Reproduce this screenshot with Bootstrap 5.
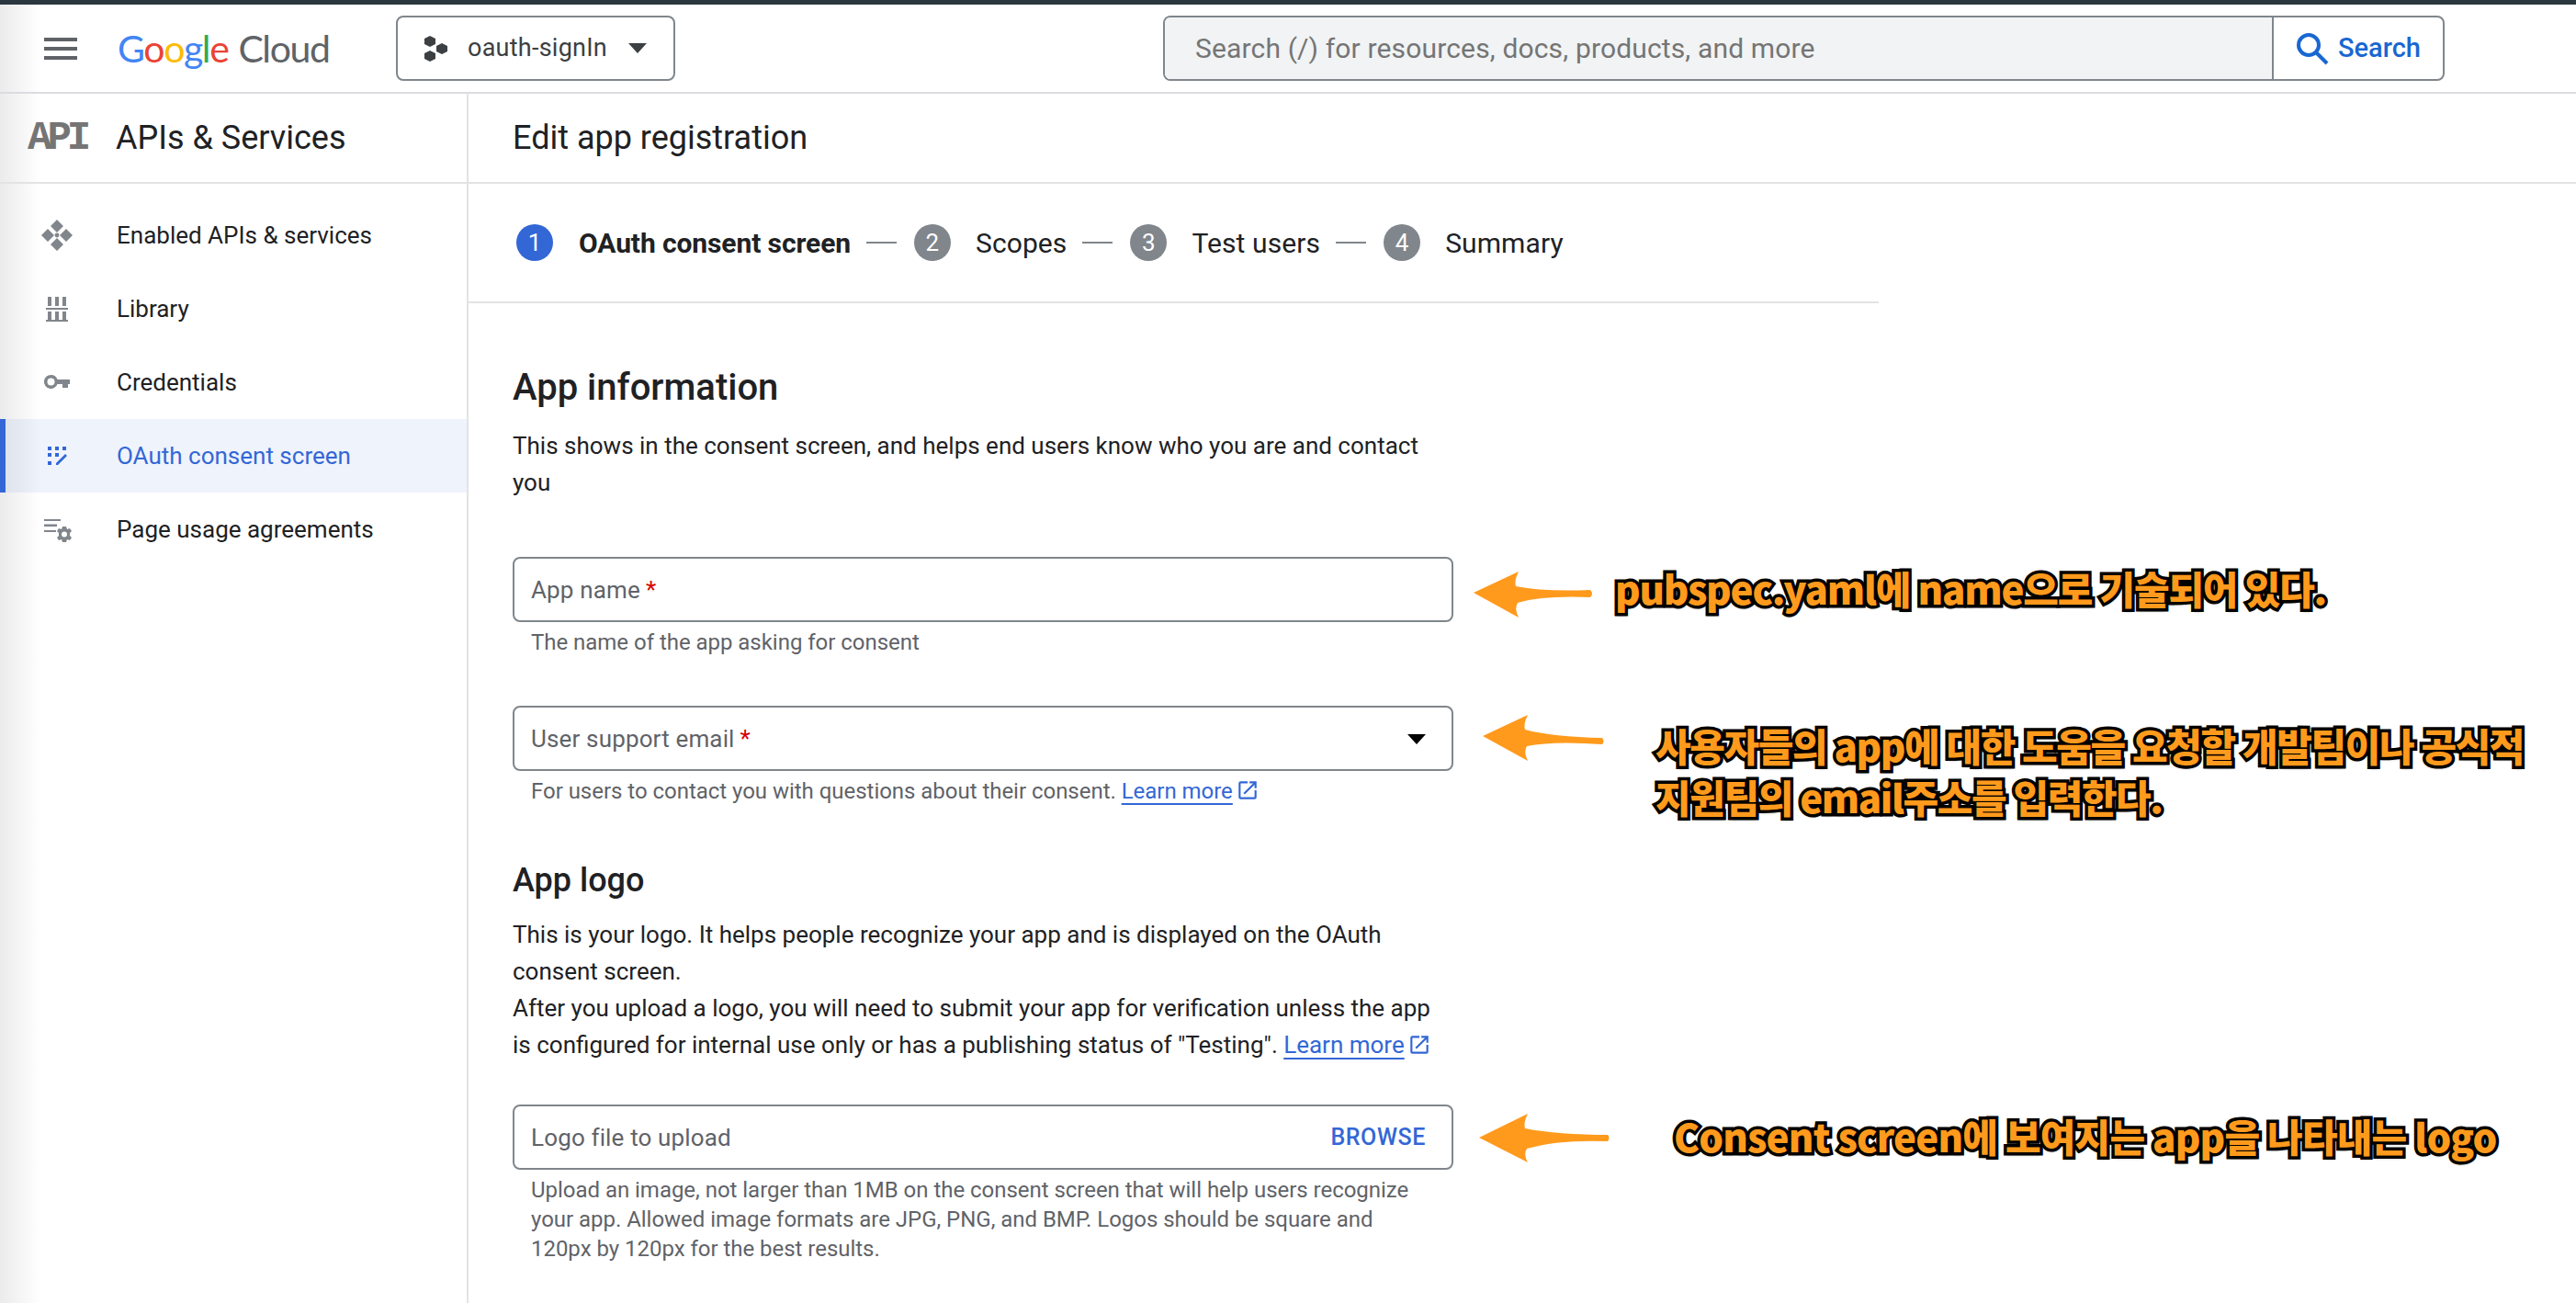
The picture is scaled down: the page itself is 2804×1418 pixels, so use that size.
<!DOCTYPE html>
<html lang="en">
<head>
    <meta charset="UTF-8">
    <title>Edit app registration</title>
    <link href="https://cdn.jsdelivr.net/npm/bootstrap@5.3.2/dist/css/bootstrap.min.css" rel="stylesheet">
    <style>
        html, body { height: 1418px; overflow: hidden; }
        body {
            position: relative;
            font-family: Roboto, "Liberation Sans", sans-serif;
            color: #202124;
            background: linear-gradient(90deg, #ebebeb 0, #fff 44px) #fff;
        }
        /* top */
        .top-strip { height: 5px; background: #2b373e; }
        .top-head { height: 97px; border-bottom: 2px solid #dadce0; padding-left: 48px; }
        .burger { width: 36px; height: 24px; flex: none; border-top: 4px solid #5f6368; border-bottom: 4px solid #5f6368; position: relative; }
        .burger::after { content: ""; position: absolute; left: 0; right: 0; top: 6px; height: 4px; background: #5f6368; }
        .g-logo { margin-left: 44px; width: 303px; flex: none; font-family: Lato, sans-serif; font-size: 41px; letter-spacing: -1.4px; line-height: 1; }
        .g-logo .cld { color: #5f6368; margin-left: 11px; font-weight: 400; }
        .proj-btn { width: 304px; height: 71px; flex: none; border: 2px solid #80868b; border-radius: 8px; padding-left: 28px; font-size: 27px; color: #3c4043; letter-spacing: .25px; }
        .proj-btn .nm { margin-left: 18px; width: 175px; }
        .search-box { margin-left: 531px; width: 1395px; height: 71px; flex: none; border: 2px solid #80868b; border-radius: 8px; overflow: hidden; }
        .search-in { flex: 1; background: #f1f3f4; padding-left: 33px; font-size: 30px; color: #757575; letter-spacing: .15px; }
        .search-btn { width: 186px; border-left: 2px solid #80868b; color: #1967d2; font-size: 29px; font-weight: 500; padding-left: 24px; gap: 10px; }
        /* sidebar */
        .main-row { height: 1316px; }
        .side-col { width: 510px; flex: none; border-right: 2px solid #e3e3e3; }
        .sub-head { height: 98px; border-bottom: 2px solid #e3e3e3; }
        .side-col .sub-head { padding-left: 30px; }
        .api-mark { width: 96px; font-family: "Liberation Mono", monospace; font-weight: 700; font-size: 44px; letter-spacing: -5px; color: #757575; line-height: 1; }
        .head-txt { font-size: 36px; color: #202124; }
        .side-list { padding-top: 16px; }
        .side-item { height: 80px; padding-left: 40px; font-size: 26px; color: #202124; }
        .side-item svg { width: 44px; height: 44px; margin-right: 43px; fill: #80868b; flex: none; }
        .side-item.on { background: rgba(51,103,214,.08); color: #3367d6; border-left: 6px solid #3367d6; padding-left: 34px; }
        .side-item.on svg { fill: #3367d6; }
        /* main */
        .main-col { flex: 1; min-width: 0; }
        .main-col .sub-head { padding-left: 48px; }
        .step-row { width: 1535px; height: 130px; padding-left: 52px; border-bottom: 2px solid #e3e3e3; font-size: 30px; letter-spacing: .1px; }
        .step-row b { letter-spacing: -.1px; }
        .step-num { width: 40px; height: 40px; border-radius: 50%; background: #80868b; color: #fff; font-size: 26px; flex: none; margin-right: 27px; }
        .step-num.on { background: #3367d6; margin-right: 28px; }
        .step-line { width: 33px; height: 2px; background: #80868b; margin: 0 19px 0 17px; flex: none; }
        .form-wrap { padding: 0 0 0 48px; width: 1072px; }
        .sec-big { font-size: 40px; font-weight: 500; margin: 68px 0 19px; line-height: 48px; }
        .sec-txt { font-size: 26px; line-height: 40px; margin: 0; }
        .sec-mid { font-size: 36px; font-weight: 500; margin: 59px 0 17px; line-height: 44px; }
        .fld { height: 71px; border: 2px solid #80868b; border-radius: 8px; padding: 1px 28px 0 18px; font-size: 26px; color: #5f6368; letter-spacing: .15px; }
        .fld-a { margin-top: 61px; }
        .fld-b { margin-top: 53px; }
        .fld-c { margin-top: 45px; }
        .req { color: #d50000; margin-left: 6px; }
        .fld-hint { font-size: 24px; line-height: 32px; color: #5f6368; padding: 6px 40px 0 20px; letter-spacing: -.03px; }
        .lnk { color: #3367d6; text-decoration: underline; text-underline-offset: 5px; }
        .ext { width: 26px; height: 26px; vertical-align: -4px; margin-left: 3px; fill: #3367d6; }
        .caret-a { width: 0; height: 0; border-left: 10px solid transparent; border-right: 10px solid transparent; border-top: 11px solid #000; }
        .caret-p { border-top-color: #3c4043; }
        .browse { color: #3367d6; font-weight: 500; font-size: 25px; letter-spacing: .6px; }
        /* annotations laid over the screenshot */
        .note {
            position: absolute;
            font-family: "Noto Sans CJK KR", sans-serif;
            font-weight: 900;
            font-size: 42px;
            line-height: 56px;
            letter-spacing: -1.2px;
            color: #ff9a1c;
            -webkit-text-stroke: 7px #000;
            paint-order: stroke fill;
            text-shadow: 0 3px 3px rgba(0,0,0,.35);
            white-space: nowrap;
        }
        .note-a { left: 1758px; top: 612px; }
        .note-b { left: 1802px; top: 783px; letter-spacing: -1.4px; }
        .note-c { left: 1822px; top: 1208px; letter-spacing: -.8px; }
        .arw { position: absolute; width: 150px; height: 60px; overflow: visible; }
        .arw-a { left: 1600px; top: 616px; }
        .arw-b { left: 1610px; top: 772px; }
        .arw-c { left: 1606px; top: 1208px; }
        .c-b { color: #4285f4; } .c-r { color: #ea4335; } .c-y { color: #fbbc04; } .c-g { color: #34a853; }
    </style>
</head>
<body>

<div class="top-strip"></div>
<header class="top-head d-flex align-items-center">
    <div class="burger"></div>
    <div class="g-logo d-flex align-items-center">
        <span><span class="c-b">G</span><span class="c-r">o</span><span class="c-y">o</span><span class="c-b">g</span><span class="c-g">l</span><span class="c-r">e</span></span><span class="cld">Cloud</span>
    </div>
    <div class="proj-btn d-flex align-items-center">
        <svg width="30" height="30" viewBox="0 0 30 30" fill="#3c4043">
            <polygon points="7,1 13,4 13,10 7,13 1,10 1,4"/>
            <polygon points="7,17 13,20 13,26 7,29 1,26 1,20"/>
            <polygon points="20,9 26,12 26,18 20,21 14,18 14,12"/>
        </svg>
        <span class="nm">oauth-signIn</span>
        <span class="caret-a caret-p"></span>
    </div>
    <div class="search-box d-flex">
        <div class="search-in d-flex align-items-center">Search (/) for resources, docs, products, and more</div>
        <div class="search-btn d-flex align-items-center">
            <svg width="36" height="36" viewBox="0 0 36 36" fill="none" stroke="#1967d2" stroke-width="4"><circle cx="14" cy="14" r="11"/><path d="M22 22l12 12"/></svg>
            <span>Search</span>
        </div>
    </div>
</header>

<div class="d-flex main-row">
    <aside class="side-col">
        <div class="sub-head d-flex align-items-center">
            <span class="api-mark">API</span>
            <span class="head-txt">APIs &amp; Services</span>
        </div>
        <nav class="side-list">
            <div class="side-item d-flex align-items-center">
                <svg viewBox="0 0 44 44">
                    <path d="M22 5l7 7-7 7-7-7zM22 25l7 7-7 7-7-7zM5 22l7-7 7 7-7 7zM25 22l7-7 7 7-7 7z"/>
                    <circle cx="22" cy="22" r="2.400"/>
                </svg>
                <span>Enabled APIs &amp; services</span>
            </div>
            <div class="side-item d-flex align-items-center">
                <svg viewBox="0 0 44 44">
                    <path d="M12 9h4v10h-4zM20 9h4v10h-4zM28 9h4v10h-4zM10 21h24v2H10zM12 25h4v9h-4zM20 25h4v9h-4zM28 25h4v9h-4zM10 34h24v2H10z"/>
                </svg>
                <span>Library</span>
            </div>
            <div class="side-item d-flex align-items-center">
                <svg viewBox="0 0 44 44">
                    <path fill-rule="evenodd" d="M15.500 14a7.500 7.500 0 0 1 7 5H36v5h-2v4h-6v-4h-5.500a7.500 7.500 0 1 1-7-10zm0 3.500a4 4 0 1 0 0 8 4 4 0 0 0 0-8z"/>
                </svg>
                <span>Credentials</span>
            </div>
            <div class="side-item on d-flex align-items-center">
                <svg viewBox="0 0 44 44">
                    <path d="M12 12h4v4h-4zM20 12h4v4h-4zM28 12h4v4h-4zM12 19h4v4h-4zM20 19h4v4h-4zM12 28h4v4h-4zM31 20l2 2-10 10h-2v-2z"/>
                </svg>
                <span>OAuth consent screen</span>
            </div>
            <div class="side-item d-flex align-items-center">
                <svg viewBox="0 0 44 44">
                    <path d="M8 11h18v2H8zM8 16.500h14v2.500H8zM8 23h13v2H8z"/>
                    <path fill-rule="evenodd" d="M28 19h4l1 3 3-1 2 3-2 2v3l2 2-2 3-3-1-1 3h-4l-1-3-3 1-2-3 2-2v-3l-2-2 2-3 3 1zm2 5.500a3 3 0 1 0 0 6 3 3 0 0 0 0-6z"/>
                </svg>
                <span>Page usage agreements</span>
            </div>
        </nav>
    </aside>

    <main class="main-col">
        <div class="sub-head d-flex align-items-center">
            <span class="head-txt">Edit app registration</span>
        </div>
        <div class="step-row d-flex align-items-center">
            <span class="step-num on d-flex align-items-center justify-content-center">1</span>
            <b class="fw-bold">OAuth consent screen</b>
            <span class="step-line"></span>
            <span class="step-num d-flex align-items-center justify-content-center">2</span>
            <span>Scopes</span>
            <span class="step-line"></span>
            <span class="step-num d-flex align-items-center justify-content-center">3</span>
            <span>Test users</span>
            <span class="step-line"></span>
            <span class="step-num d-flex align-items-center justify-content-center">4</span>
            <span>Summary</span>
        </div>

        <div class="form-wrap">
            <h2 class="sec-big">App information</h2>
            <p class="sec-txt">This shows in the consent screen, and helps end users know who you are and contact you</p>

            <div class="fld fld-a d-flex align-items-center"><span>App name</span><span class="req">*</span></div>
            <div class="fld-hint">The name of the app asking for consent</div>

            <div class="fld fld-b d-flex align-items-center justify-content-between">
                <span>User support email<span class="req">*</span></span>
                <span class="caret-a"></span>
            </div>
            <div class="fld-hint">For users to contact you with questions about their consent. <span class="lnk">Learn more</span><svg class="ext" viewBox="0 0 24 24"><path d="M19 19H5V5h7V3H5a2 2 0 0 0-2 2v14a2 2 0 0 0 2 2h14a2 2 0 0 0 2-2v-7h-2v7zM14 3v2h3.600l-9.800 9.800 1.400 1.400L19 6.400V10h2V3h-7z"/></svg></div>

            <h3 class="sec-mid">App logo</h3>
            <p class="sec-txt">This is your logo. It helps people recognize your app and is displayed on the OAuth consent screen.<br>After you upload a logo, you will need to submit your app for verification unless the app is configured for internal use only or has a publishing status of "Testing". <span class="lnk">Learn more</span><svg class="ext" viewBox="0 0 24 24"><path d="M19 19H5V5h7V3H5a2 2 0 0 0-2 2v14a2 2 0 0 0 2 2h14a2 2 0 0 0 2-2v-7h-2v7zM14 3v2h3.600l-9.800 9.800 1.400 1.400L19 6.400V10h2V3h-7z"/></svg></p>

            <div class="fld fld-c d-flex align-items-center justify-content-between">
                <span>Logo file to upload</span>
                <span class="browse">BROWSE</span>
            </div>
            <div class="fld-hint">Upload an image, not larger than 1MB on the consent screen that will help users recognize your app. Allowed image formats are JPG, PNG, and BMP. Logos should be square and 120px by 120px for the best results.</div>
        </div>
    </main>
</div>

<svg class="arw arw-a" viewBox="0 0 150 60"><path fill="#ff9a1c" d="M4 29 L53 6 Q48 16 50 22 Q80 28 131 26 Q135 30 131 34 Q80 32 52 40 Q48 46 53 56 Z"/></svg>
<svg class="arw arw-b" viewBox="0 0 150 60"><path fill="#ff9a1c" d="M4 29 L53 6 Q48 16 50 22 Q80 30 134 31 Q137 35 134 38 Q80 34 52 40 Q48 46 53 56 Z"/></svg>
<svg class="arw arw-c" viewBox="0 0 150 60"><path fill="#ff9a1c" d="M4 30 L57 4 Q52 14 54 20 Q90 27 144 27 Q147 30 144 34 Q90 32 56 42 Q52 48 57 57 Z"/></svg>

<div class="note note-a">pubspec.yaml에 name으로 기술되어 있다.</div>
<div class="note note-b">사용자들의 app에 대한 도움을 요청할 개발팀이나 공식적<br>지원팀의 email주소를 입력한다.</div>
<div class="note note-c">Consent screen에 보여지는 app을 나타내는 logo</div>

<script src="https://cdn.jsdelivr.net/npm/bootstrap@5.3.2/dist/js/bootstrap.bundle.min.js"></script>
</body>
</html>
